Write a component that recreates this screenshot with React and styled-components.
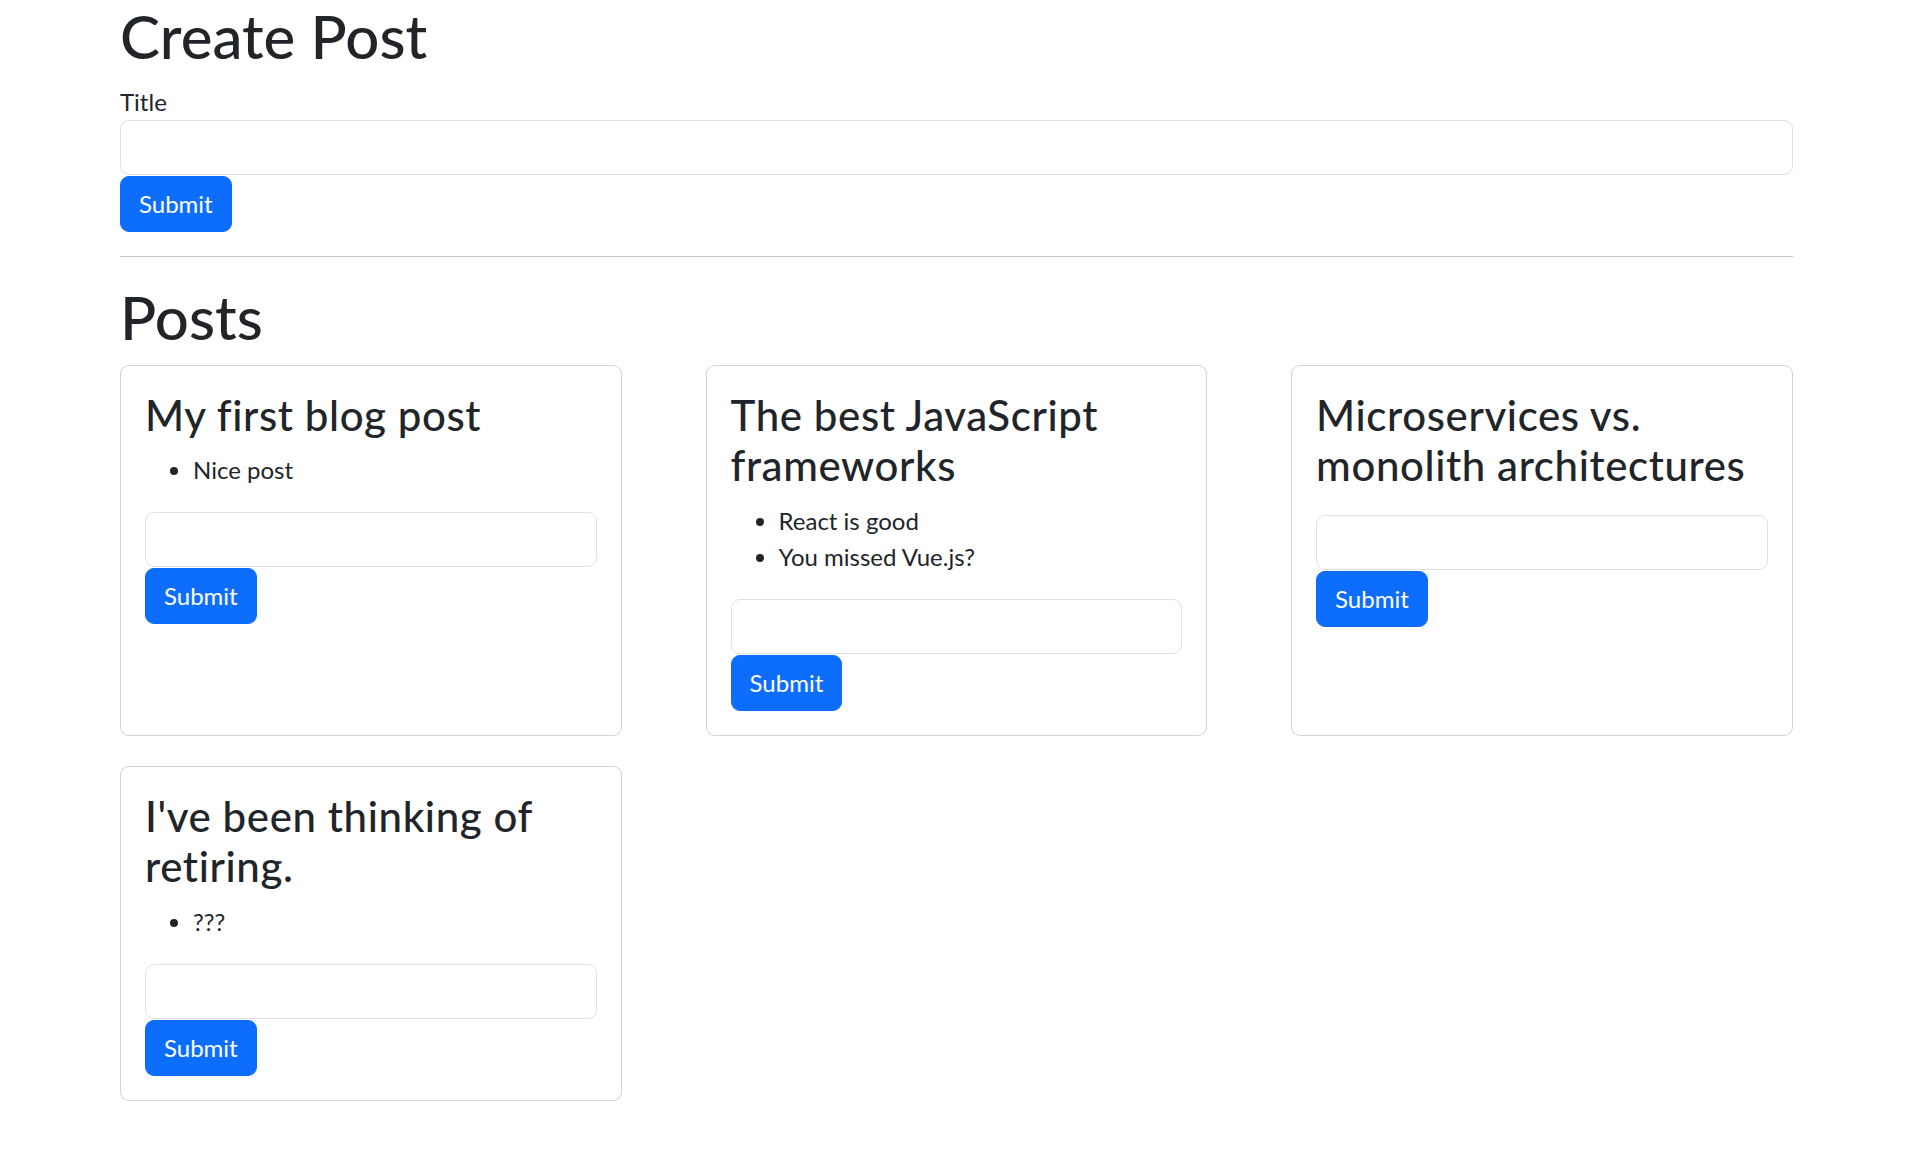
import React from "react";
import styled, { createGlobalStyle } from "styled-components";

const GlobalStyle = createGlobalStyle`
  *, *::before, *::after { box-sizing: border-box; }
  html, body { margin: 0; padding: 0; background: #fff; }
  body {
    font-family: "Lato", "Open Sans", "Noto Sans", sans-serif;
    font-size: 24px;
    line-height: 1.5;
    color: #212529;
  }
`;

const Container = styled.div`
  width: 1673px;
  margin: 0 113px 0 120px;
`;

const PageTitle = styled.h1`
  margin: 0 0 12px;
  font-size: 60px;
  font-weight: 500;
  line-height: 1.2;
`;

const Label = styled.label`
  display: block;
  font-size: 24px;
  line-height: 36px;
`;

const Field = styled.input`
  display: block;
  width: 100%;
  height: 55px;
  margin: 0;
  padding: 9px 18px;
  font: inherit;
  color: #212529;
  background: #fff;
  border: 1.5px solid #dee2e6;
  border-radius: 9px;
  outline: none;
`;

const Button = styled.button`
  display: inline-block;
  height: 56px;
  margin: 1px 0 0;
  padding: 0 18px;
  font: inherit;
  font-size: 24px;
  line-height: 1.5;
  color: #fff;
  background: #0d6efd;
  border: 1.5px solid #0d6efd;
  border-radius: 9px;
  cursor: pointer;
`;

const Rule = styled.hr`
  margin: 24px 0;
  border: 0;
  border-top: 1.5px solid #212529;
  opacity: 0.25;
`;

const CardGrid = styled.div`
  display: flex;
  flex-flow: row wrap;
  justify-content: space-between;
`;

const Card = styled.div`
  width: 30%;
  margin-bottom: 30px;
  background: #fff;
  border: 1.5px solid rgba(0, 0, 0, 0.175);
  border-radius: 9px;
`;

const CardBody = styled.div`
  padding: 24px;
`;

const CardTitle = styled.h3`
  margin: 0 0 12px;
  font-size: 42px;
  font-weight: 500;
  line-height: 1.2;
  letter-spacing: 0.6px;
`;

const CommentList = styled.ul`
  margin: 0 0 24px;
  padding-left: 48px;
`;

const Comment = styled.li`
  line-height: 36px;
`;

const posts = [
  { id: 1, title: "My first blog post", comments: ["Nice post"] },
  {
    id: 2,
    title: "The best JavaScript frameworks",
    comments: ["React is good", "You missed Vue.js?"],
  },
  { id: 3, title: "Microservices vs. monolith architectures", comments: [] },
  { id: 4, title: "I've been thinking of retiring.", comments: ["???"] },
];

export default function App() {
  return (
    <>
      <GlobalStyle />
      <Container>
        <PageTitle>Create Post</PageTitle>
        <form onSubmit={(e) => e.preventDefault()}>
          <Label>Title</Label>
          <Field />
          <Button type="submit">Submit</Button>
        </form>
        <Rule />
        <PageTitle>Posts</PageTitle>
        <CardGrid>
          {posts.map((p) => (
            <Card key={p.id}>
              <CardBody>
                <CardTitle>{p.title}</CardTitle>
                <CommentList>
                  {p.comments.map((c) => (
                    <Comment key={c}>{c}</Comment>
                  ))}
                </CommentList>
                <form onSubmit={(e) => e.preventDefault()}>
                  <Field />
                  <Button type="submit">Submit</Button>
                </form>
              </CardBody>
            </Card>
          ))}
        </CardGrid>
      </Container>
    </>
  );
}
